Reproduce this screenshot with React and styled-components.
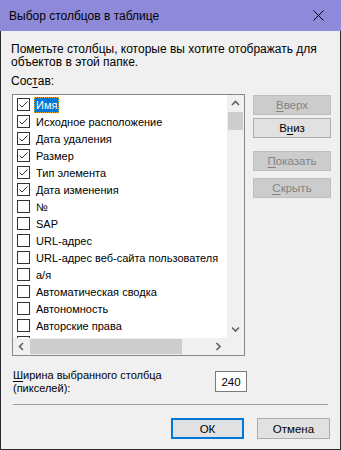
import React from 'react'
import styled, { createGlobalStyle } from 'styled-components'

const GlobalStyle = createGlobalStyle`
	html, body {
		margin: 0;
		padding: 0;
		background: #f0f0f0;
	}
	body {
		font-family: "Liberation Sans", Arial, sans-serif;
		font-size: 12px;
		color: #000;
	}
`

const Window = styled.div`
	width: 341px;
	height: 450px;
	display: flex;
	flex-direction: column;
	box-sizing: border-box;
`

const TitleBar = styled.div`
	height: 31px;
	flex: none;
	display: flex;
	align-items: center;
	justify-content: space-between;
	background: #8e8ad9;
	padding-left: 9px;
`

const Title = styled.span`
	font-size: 12px;
	color: #000;
`

const CloseButton = styled.div`
	width: 46px;
	height: 31px;
	display: flex;
	align-items: center;
	justify-content: center;
`

const Body = styled.div`
	flex: 1;
	display: flex;
	flex-direction: column;
	background: #f0f0f0;
	border: 1px solid #2a2a2a;
	border-top: none;
	padding: 12px 0 0 10px;
`

const Hint = styled.p`
	margin: 0;
	line-height: 13px;
	width: 310px;
`

const Label = styled.div`
	margin-top: 6px;
	line-height: 13px;
`

const Key = styled.span`
	text-decoration: underline;
	text-underline-offset: 2px;
`

const MainRow = styled.div`
	display: flex;
	gap: 8px;
	margin-top: 6px;
	margin-left: 1px;
`

const ListBox = styled.div`
	width: 233px;
	height: 262px;
	box-sizing: border-box;
	border: 1px solid #828790;
	background: #fff;
	display: grid;
	grid-template-columns: 1fr 17px;
	grid-template-rows: 1fr 17px;
	font-size: 11px;
`

const Items = styled.div`
	overflow: hidden;
	padding-top: 1px;
`

const Row = styled.div`
	height: 17px;
	display: flex;
	align-items: center;
	padding-left: 4px;
	white-space: nowrap;
`

const Box = styled.span`
	width: 13px;
	height: 13px;
	box-sizing: border-box;
	border: 1px solid #333;
	background: #fff;
	flex: none;
	margin-right: 4px;
	display: flex;
`

const ItemText = styled.span`
	height: 16px;
	line-height: 16px;
	padding: 0 2px;
	box-sizing: border-box;
	background: ${p => (p.$selected ? '#0078d7' : 'transparent')};
	color: ${p => (p.$selected ? '#fff' : '#000')};
	outline: ${p => (p.$selected ? '1px dotted #f5a623' : 'none')};
	outline-offset: -1px;
`

const VScroll = styled.div`
	background: #f0f0f0;
	display: flex;
	flex-direction: column;
`

const HScroll = styled.div`
	background: #f0f0f0;
	display: flex;
	align-items: stretch;
`

const Corner = styled.div`
	background: #f0f0f0;
`

const Arrow = styled.div`
	width: 17px;
	height: 17px;
	flex: none;
	display: flex;
	align-items: center;
	justify-content: center;
`

const VThumb = styled.div`
	height: 18px;
	margin: 0 1px;
	background: #cdcdcd;
`

const HThumb = styled.div`
	width: 152px;
	margin: 1px 0;
	background: #cdcdcd;
`

const Track = styled.div`
	flex: 1;
`

const SideButtons = styled.div`
	display: flex;
	flex-direction: column;
	padding-top: 1px;
`

const Button = styled.div`
	box-sizing: border-box;
	width: ${p => p.$w || 78}px;
	height: ${p => p.$h || 20}px;
	margin-top: ${p => p.$mt || 0}px;
	display: flex;
	align-items: center;
	justify-content: center;
	font-size: 11.5px;
	background: ${p => (p.$disabled ? '#cccccc' : '#e1e1e1')};
	border: ${p => (p.$primary ? '2px solid #0078d7' : p.$disabled ? '1px solid #bfbfbf' : '1px solid #adadad')};
	color: ${p => (p.$disabled ? '#838383' : '#000')};
`

const WidthRow = styled.div`
	width: 233px;
	margin: 12px 0 0 2px;
	display: flex;
	align-items: center;
	justify-content: space-between;
`

const WidthLabel = styled.div`
	line-height: 13px;
	padding-top: 1px;
	font-size: 11px;
`

const NumberBox = styled.div`
	width: 32px;
	height: 21px;
	box-sizing: border-box;
	border: 1px solid #7a7a7a;
	background: #fff;
	display: flex;
	align-items: center;
	justify-content: center;
	margin-right: -1px;
	font-size: 11.5px;
`

const Separator = styled.div`
	width: 315px;
	height: 1px;
	margin: 9px 0 0 2px;
	background: #a0a0a0;
`

const Footer = styled.div`
	display: flex;
	gap: 13px;
	margin: 13px 0 0 160px;
`

const items = [
	['Имя', true],
	['Исходное расположение', true],
	['Дата удаления', true],
	['Размер', true],
	['Тип элемента', true],
	['Дата изменения', true],
	['№', false],
	['SAP', false],
	['URL-адрес', false],
	['URL-адрес веб-сайта пользователя', false],
	['а/я', false],
	['Автоматическая сводка', false],
	['Автономность', false],
	['Авторские права', false],
	['', false]
]

const Check = () => (
	<svg width="11" height="11" viewBox="0 0 11 11">
		<path d="M1.5 5.5 L4 8 L9.5 2.5" fill="none" stroke="#333" strokeWidth="1" />
	</svg>
)

const Chevron = ({ dir }) => {
	const paths = {
		up: 'M1 5 L4.5 1.5 L8 5',
		down: 'M1 1.5 L4.5 5 L8 1.5',
		left: 'M5 1 L1.5 4.5 L5 8',
		right: 'M1.5 1 L5 4.5 L1.5 8'
	}
	const vertical = dir === 'up' || dir === 'down'
	return (
		<svg width={vertical ? 9 : 7} height={vertical ? 7 : 9} viewBox={vertical ? '0 0 9 7' : '0 0 7 9'}>
			<path d={paths[dir]} fill="none" stroke="#606060" strokeWidth="1.6" />
		</svg>
	)
}

const App = () => (
	<Window>
		<GlobalStyle />
		<TitleBar>
			<Title>Выбор столбцов в таблице</Title>
			<CloseButton>
				<svg width="11" height="11" viewBox="0 0 11 11">
					<path d="M0.5 0.5 L10.5 10.5 M10.5 0.5 L0.5 10.5" stroke="#000" strokeWidth="1" />
				</svg>
			</CloseButton>
		</TitleBar>
		<Body>
			<Hint>Пометьте столбцы, которые вы хотите отображать для объектов в этой папке.</Hint>
			<Label>Сос<Key>т</Key>ав:</Label>
			<MainRow>
				<ListBox>
					<Items>
						{items.map(([name, checked], i) => (
							<Row key={i}>
								<Box>{checked && <Check />}</Box>
								{name && <ItemText $selected={i === 0}>{name}</ItemText>}
							</Row>
						))}
					</Items>
					<VScroll>
						<Arrow><Chevron dir="up" /></Arrow>
						<VThumb />
						<Track />
						<Arrow><Chevron dir="down" /></Arrow>
					</VScroll>
					<HScroll>
						<Arrow><Chevron dir="left" /></Arrow>
						<HThumb />
						<Track />
						<Arrow><Chevron dir="right" /></Arrow>
					</HScroll>
					<Corner />
				</ListBox>
				<SideButtons>
					<Button $disabled><Key>В</Key>верх</Button>
					<Button $mt={3}>В<Key>н</Key>из</Button>
					<Button $disabled $mt={13}><Key>П</Key>оказать</Button>
					<Button $disabled $mt={7}><Key>С</Key>крыть</Button>
				</SideButtons>
			</MainRow>
			<WidthRow>
				<WidthLabel><Key>Ш</Key>ирина выбранного столбца<br />(пикселей):</WidthLabel>
				<NumberBox>240</NumberBox>
			</WidthRow>
			<Separator />
			<Footer>
				<Button $primary $w={73} $h={21}>ОК</Button>
				<Button $w={73} $h={21}>Отмена</Button>
			</Footer>
		</Body>
	</Window>
)

export default App
